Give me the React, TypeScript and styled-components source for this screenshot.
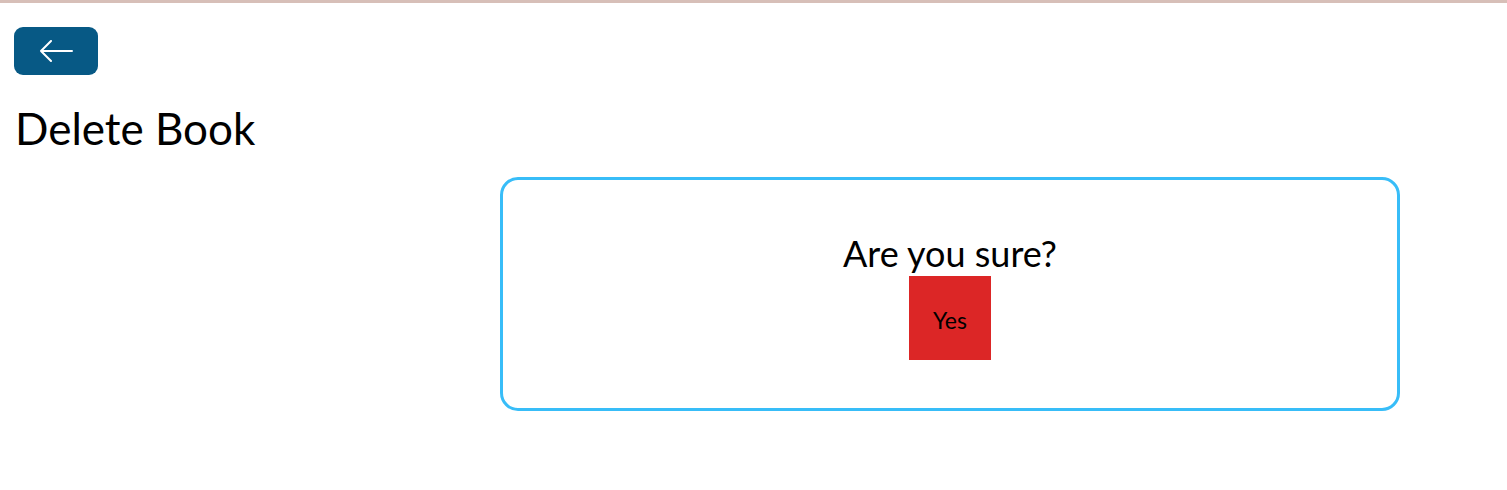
import React from "react";
import styled, { createGlobalStyle } from "styled-components";

const GlobalStyle = createGlobalStyle`
  html, body {
    margin: 0;
    padding: 0;
    background: #ffffff;
  }
  body {
    font-family: Lato, "Open Sans", "Noto Sans", sans-serif;
    color: #000000;
  }
`;

const Page = styled.div`
  border-top: 3px solid #d7bfb8;
  padding: 24px 14px 0 14px;
  min-height: 487px;
  box-sizing: border-box;
`;

const BackButton = styled.button`
  display: flex;
  align-items: center;
  justify-content: center;
  width: 84px;
  height: 48px;
  border: none;
  border-radius: 9px;
  background: #075985;
  padding: 0;
  cursor: pointer;
`;

const Title = styled.h1`
  margin: 26px 0 0 1px;
  font-size: 44px;
  font-weight: 400;
  line-height: 54px;
`;

const Card = styled.div`
  box-sizing: border-box;
  width: 900px;
  margin: 22px 0 0 486px;
  border: 3px solid #38bdf8;
  border-radius: 18px;
  padding: 53px 0 48px 0;
  display: flex;
  flex-direction: column;
  align-items: center;
`;

const Question = styled.h3`
  margin: 0;
  font-size: 36px;
  font-weight: 400;
  line-height: 40px;
`;

const YesButton = styled.button`
  margin-top: 3px;
  width: 82px;
  height: 84px;
  border: none;
  background: #dc2626;
  color: #000000;
  font-family: Lato, "Open Sans", sans-serif;
  font-size: 23px;
  padding: 4px 0 0 0;
  cursor: pointer;
`;

const ArrowIcon = () => (
  <svg width="34" height="22" viewBox="0 0 34 22" fill="none">
    <path
      d="M33 11H2M12 1L2 11l10 10"
      stroke="#ffffff"
      strokeWidth="2"
      strokeLinecap="round"
      strokeLinejoin="round"
    />
  </svg>
);

export default function App() {
  return (
    <>
      <GlobalStyle />
      <Page>
        <BackButton aria-label="Back">
          <ArrowIcon />
        </BackButton>
        <Title>Delete Book</Title>
        <Card>
          <Question>Are you sure?</Question>
          <YesButton>Yes</YesButton>
        </Card>
      </Page>
    </>
  );
}
